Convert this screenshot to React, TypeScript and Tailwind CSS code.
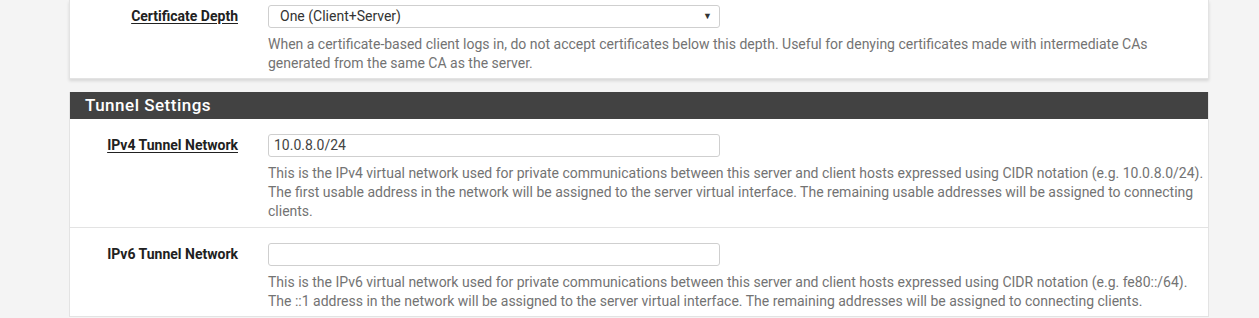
import React from "react";

type RowProps = {
  label: string;
  underline?: boolean;
  children: React.ReactNode;
  help: React.ReactNode;
  first?: boolean;
  className?: string;
};

const Row = ({ label, underline, children, help, first, className }: RowProps) => (
  <div
    className={`flex pb-[5px] ${first ? "" : "border-t border-[#e3e3e3]"} ${className ?? "pt-[15px]"}`}
  >
    <div className="w-[168px] shrink-0 h-[23px] flex items-center justify-end">
      <span
        className={`text-[14px] font-bold text-[#212121] ${underline ? "underline underline-offset-2" : ""}`}
      >
        {label}
      </span>
    </div>
    <div className="ml-[30px] flex flex-col">
      {children}
      <p className="mt-[7px] w-[938px] text-[14px] leading-[19px] text-[#737373]">{help}</p>
    </div>
  </div>
);

const TextInput = ({ value }: { value?: string }) => (
  <div className="w-[452px] h-[23px] border border-[#cfcfcf] rounded-[3px] bg-white flex items-center px-[5px] text-[14px] text-[#444]">
    {value}
  </div>
);

export default function App() {
  return (
    <div className="h-[318px] overflow-hidden bg-[#f4f4f4] font-['Roboto',sans-serif]">
      <div className="ml-[69px] w-[1140px]">
        <div className="bg-white border-x border-b border-[#e3e3e3] shadow-[0_2px_3px_rgba(0,0,0,0.12)]">
          <Row
            first
            underline
            label="Certificate Depth"
            className="pt-[5px]"
            help="When a certificate-based client logs in, do not accept certificates below this depth. Useful for denying certificates made with intermediate CAs generated from the same CA as the server."
          >
            <div className="w-[452px] h-[23px] border border-[#cfcfcf] rounded-[3px] bg-white flex items-center justify-between pl-[11px] pr-[7px] text-[14px] text-[#333]">
              <span>One (Client+Server)</span>
              <span className="text-[9px] text-[#333]">▼</span>
            </div>
          </Row>
        </div>

        <div className="mt-[13px] bg-white border-x border-b border-[#e3e3e3]">
          <div className="h-[27px] bg-[#424242] flex items-center px-[15px] text-[17px] font-medium tracking-[0.5px] text-white">
            Tunnel Settings
          </div>
          <Row
            underline
            label="IPv4 Tunnel Network"
            help="This is the IPv4 virtual network used for private communications between this server and client hosts expressed using CIDR notation (e.g. 10.0.8.0/24). The first usable address in the network will be assigned to the server virtual interface. The remaining usable addresses will be assigned to connecting clients."
            first
            className="pt-[15px] pb-[6px]"
          >
            <TextInput value="10.0.8.0/24" />
          </Row>
          <Row
            label="IPv6 Tunnel Network"
            help="This is the IPv6 virtual network used for private communications between this server and client hosts expressed using CIDR notation (e.g. fe80::/64). The ::1 address in the network will be assigned to the server virtual interface. The remaining addresses will be assigned to connecting clients."
          >
            <TextInput />
          </Row>
        </div>
      </div>
    </div>
  );
}
